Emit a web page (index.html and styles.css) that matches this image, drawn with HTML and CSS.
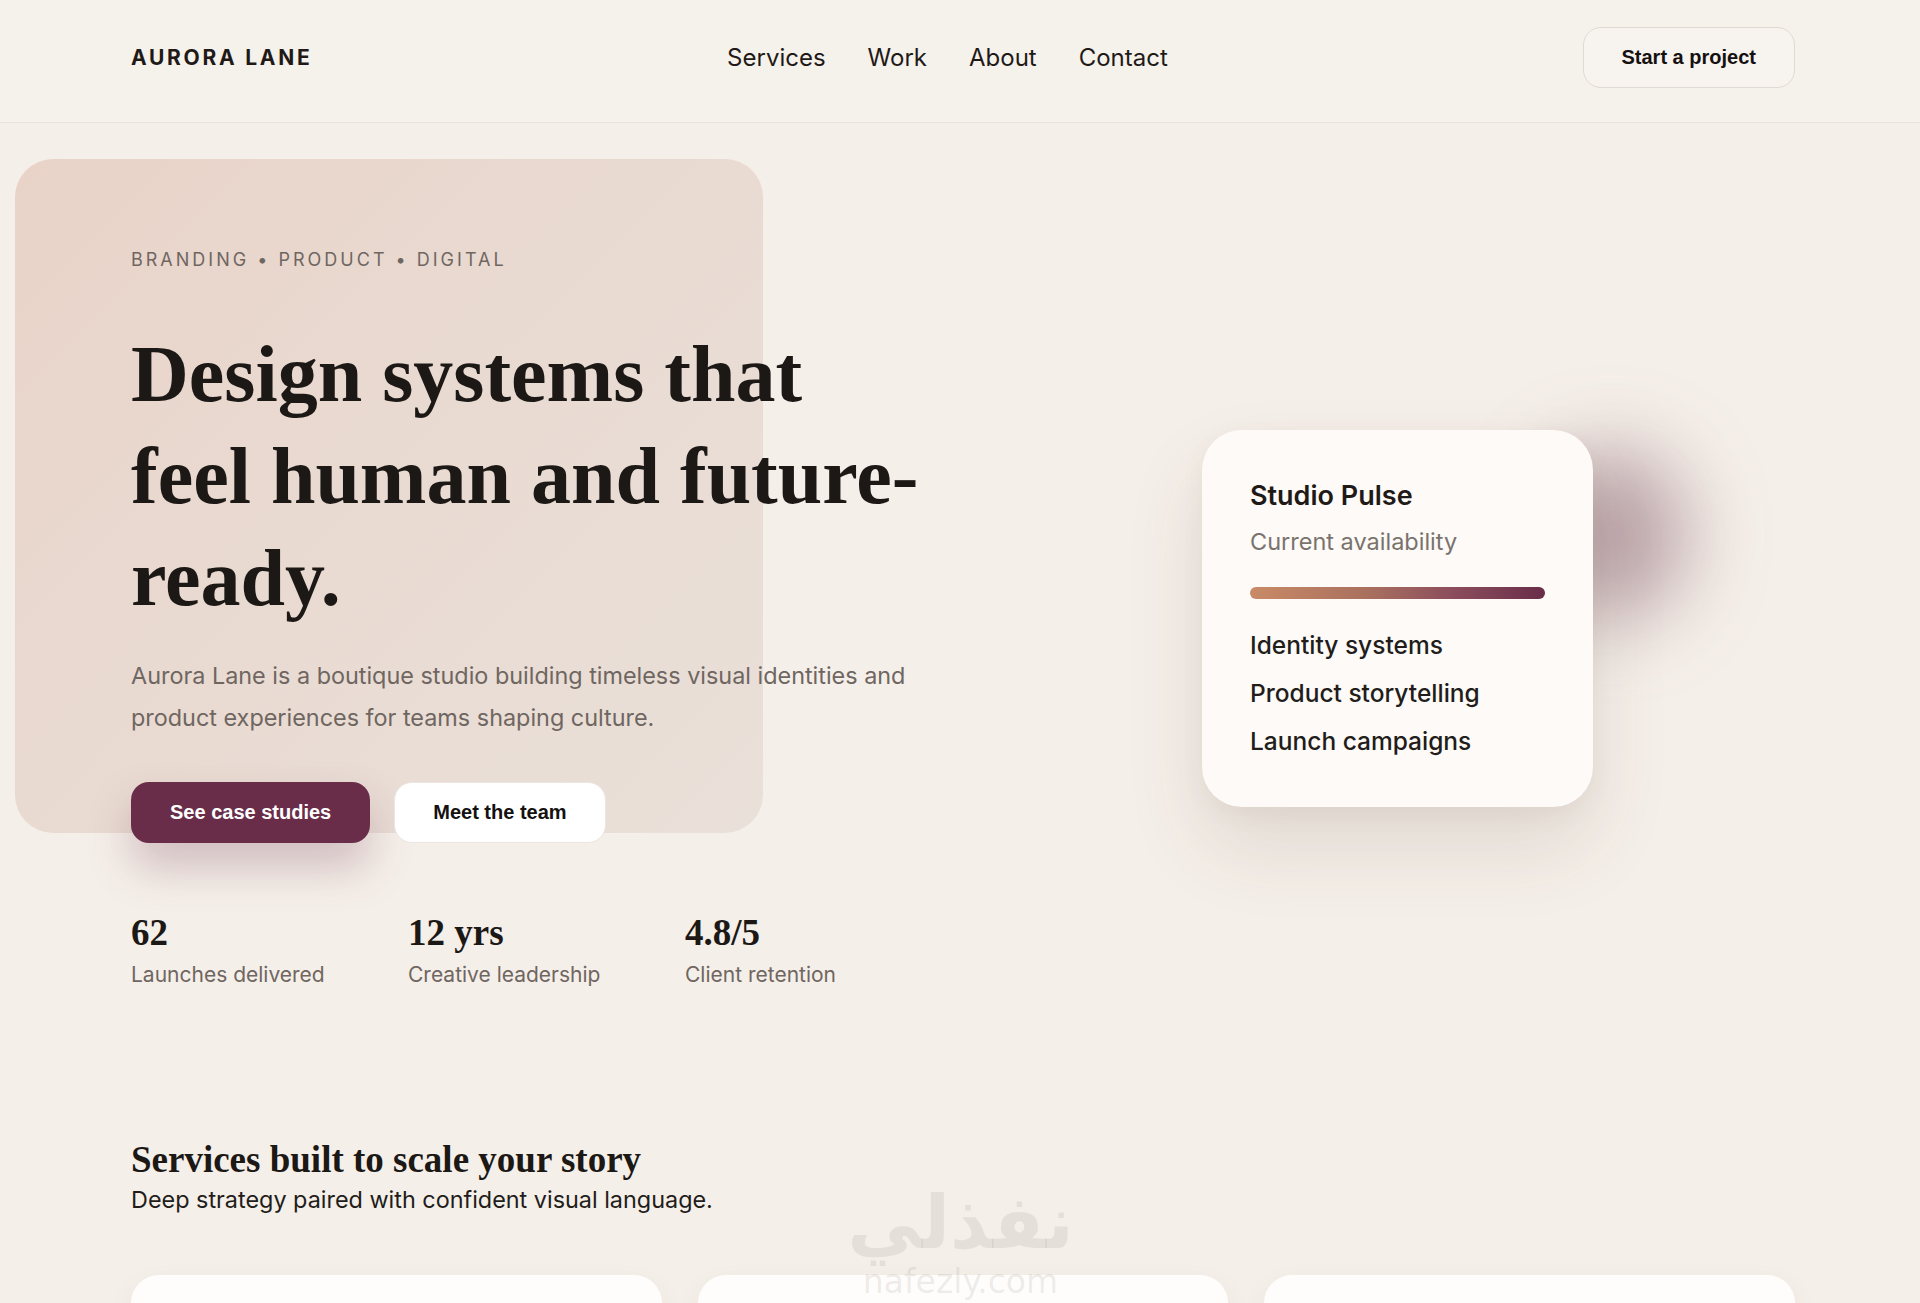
FILE: index.html
```html
<!DOCTYPE html>
<html lang="en">
<head>
<meta charset="utf-8">
<title>Aurora Lane</title>
<link rel="stylesheet" href="styles.css">
</head>
<body>
<header class="site-header">
  <div class="container header-inner">
    <a class="logo" href="#">AURORA LANE</a>
    <nav class="nav">
      <a href="#">Services</a>
      <a href="#">Work</a>
      <a href="#">About</a>
      <a href="#">Contact</a>
    </nav>
    <button class="btn btn-light">Start a project</button>
  </div>
</header>
<main>
  <section class="hero">
    <div class="hero-panel"></div>
    <div class="container hero-grid">
      <div class="hero-copy">
        <p class="eyebrow">BRANDING • PRODUCT • DIGITAL</p>
        <h1 class="hero-title">Design systems that feel human and future-ready.</h1>
        <p class="hero-text">Aurora Lane is a boutique studio building timeless visual identities and product experiences for teams shaping culture.</p>
        <div class="hero-actions">
          <button class="btn btn-primary">See case studies</button>
          <button class="btn btn-white">Meet the team</button>
        </div>
        <div class="stats">
          <div class="stat"><span class="stat-num">62</span><span class="stat-label">Launches delivered</span></div>
          <div class="stat"><span class="stat-num">12 yrs</span><span class="stat-label">Creative leadership</span></div>
          <div class="stat"><span class="stat-num">4.8/5</span><span class="stat-label">Client retention</span></div>
        </div>
      </div>
      <div class="hero-aside">
        <div class="pulse-glow"></div>
        <div class="pulse-card">
          <h3 class="pulse-title">Studio Pulse</h3>
          <p class="pulse-sub">Current availability</p>
          <div class="pulse-bar"></div>
          <ul class="pulse-list">
            <li>Identity systems</li>
            <li>Product storytelling</li>
            <li>Launch campaigns</li>
          </ul>
        </div>
      </div>
    </div>
  </section>
  <section class="services">
    <div class="container">
      <h2 class="section-title">Services built to scale your story</h2>
      <p class="section-sub">Deep strategy paired with confident visual language.</p>
      <div class="service-grid">
        <div class="service-card"></div>
        <div class="service-card"></div>
        <div class="service-card"></div>
      </div>
    </div>
  </section>
</main>
<div class="watermark" aria-hidden="true">
  <span class="wm-ar">نفذلي</span>
  <span class="wm-en">nafezly.com</span>
</div>
</body>
</html>
```
FILE: styles.css
```css
* { box-sizing: border-box; }
html, body { margin: 0; padding: 0; }
body {
  font-family: Inter, "Noto Sans", sans-serif;
  background: #f5efe9;
  color: #1f1a17;
  height: 1303px;
  overflow: hidden;
  position: relative;
}
a { color: inherit; text-decoration: none; }
.container {
  padding: 0 125px 0 131px;
}

/* header */
.site-header {
  background: #f5f1eb;
  border-bottom: 1px solid #e9e3dc;
}
.header-inner {
  height: 122px;
  padding-bottom: 8px;
  display: flex;
  align-items: center;
  justify-content: space-between;
}
.logo {
  font-weight: 700;
  font-size: 21px;
  letter-spacing: 0.13em;
  color: #1f1a17;
}
.nav {
  display: flex;
  gap: 42px;
  font-size: 24px;
  color: #1f1a17;
}

.btn {
  font-family: "Liberation Sans", Arial, sans-serif;
  font-weight: 700;
  font-size: 20px;
  line-height: 23px;
  padding: 18px 38px;
  border-radius: 18px;
  border: 1px solid transparent;
  cursor: pointer;
}
.btn-light {
  background: #f7f3ee;
  border-color: #e1dad3;
  color: #141110;
}
.btn-primary {
  background: #692d49;
  color: #fff;
  box-shadow: 0 24px 44px rgba(105, 45, 73, 0.26);
}
.btn-white {
  background: #fff;
  border-color: #ece6e0;
  color: #141110;
}

/* hero */
.hero {
  position: relative;
  padding: 123px 0 74px;
}
.hero-panel {
  position: absolute;
  left: 15px;
  top: 36px;
  width: 748px;
  height: 674px;
  border-radius: 38px;
  background: linear-gradient(135deg, #e9d3c8 0%, #e9dad1 45%, #e9e0d9 100%);
}
.hero-grid {
  position: relative;
  display: grid;
  grid-template-columns: 1071px 391px;
  align-items: center;
}
.eyebrow {
  margin: 0;
  font-size: 18px;
  line-height: 27px;
  letter-spacing: 0.167em;
  color: #6f6661;
}
.hero-title {
  margin: 50px 0 0;
  max-width: 805px;
  font-family: "Liberation Serif", "Times New Roman", serif;
  font-weight: 700;
  font-size: 80px;
  line-height: 102px;
  color: #1c1815;
}
.hero-text {
  margin: 26px 0 0;
  max-width: 800px;
  font-size: 23.4px;
  line-height: 42px;
  color: #6f6661;
}
.hero-actions {
  display: flex;
  gap: 24px;
  margin-top: 43px;
}
.stats {
  display: grid;
  grid-template-columns: 229px 229px 229px;
  column-gap: 48px;
  margin-top: 68px;
}
.stat { display: flex; flex-direction: column; }
.stat-num {
  font-family: "Liberation Serif", "Times New Roman", serif;
  font-weight: 700;
  font-size: 37px;
  line-height: 43px;
  color: #1c1815;
}
.stat-label {
  margin-top: 6px;
  font-size: 21px;
  line-height: 30px;
  color: #6f6661;
}

.hero-aside {
  position: relative;
}
.pulse-glow {
  position: absolute;
  left: 335px;
  top: 20px;
  width: 150px;
  height: 170px;
  border-radius: 50%;
  background: rgba(115, 70, 88, 0.45);
  filter: blur(40px);
}
.pulse-card {
  position: relative;
  background: #fdfaf7;
  border-radius: 40px;
  padding: 46px 48px 42px;
  box-shadow: 0 40px 80px rgba(80, 60, 45, 0.12), 0 8px 24px rgba(80, 60, 45, 0.05);
}
.pulse-title {
  margin: 0;
  font-size: 27px;
  line-height: 40px;
  font-weight: 600;
  color: #1f1a17;
}
.pulse-sub {
  margin: 9px 0 0;
  font-size: 23.5px;
  line-height: 34px;
  color: #7a726d;
}
.pulse-bar {
  margin-top: 28px;
  height: 12px;
  border-radius: 6px;
  background: linear-gradient(90deg, #c98a66 0%, #a9705f 40%, #8a4c5c 70%, #692d49 100%);
}
.pulse-list {
  list-style: none;
  margin: 22px 0 0;
  padding: 0;
}
.pulse-list li {
  font-size: 24.5px;
  line-height: 48px;
  font-weight: 500;
  color: #221d1a;
}

/* services */
.services {
  padding-top: 74px;
}
.section-title {
  margin: 0;
  font-family: "Liberation Serif", "Times New Roman", serif;
  font-weight: 700;
  font-size: 37px;
  line-height: 44px;
  color: #1c1815;
}
.section-sub {
  margin: 1px 0 0;
  font-size: 23.4px;
  line-height: 33px;
  color: #221d1a;
}
.service-grid {
  display: grid;
  grid-template-columns: repeat(3, 1fr);
  gap: 36px;
  margin-top: 59px;
}
.service-card {
  height: 220px;
  background: #fffdfb;
  border-radius: 28px;
  box-shadow: 0 10px 30px rgba(80, 60, 45, 0.05);
}

/* watermark */
.watermark {
  position: absolute;
  left: 843px;
  top: 1180px;
  width: 235px;
  display: flex;
  flex-direction: column;
  align-items: center;
  color: rgba(150, 140, 135, 0.16);
  pointer-events: none;
}
.wm-ar {
  font-family: "DejaVu Sans", sans-serif;
  font-weight: 700;
  font-size: 74px;
  line-height: 84px;
}
.wm-en {
  font-family: "DejaVu Sans", sans-serif;
  font-size: 33px;
  line-height: 36px;
}
```
